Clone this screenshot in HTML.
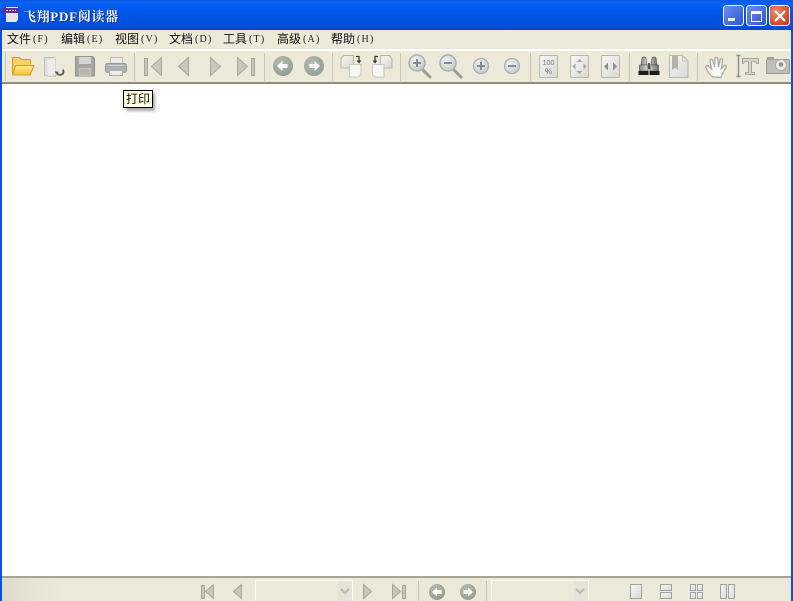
<!DOCTYPE html>
<html><head><meta charset="utf-8"><style>
html,body{margin:0;padding:0;width:793px;height:601px;overflow:hidden;background:#fff}
#a{position:relative;width:793px;height:601px;overflow:hidden}
#a div{position:absolute}
.m{top:31px;height:16px;font:12px/16px "WenQuanYi Zen Hei","Noto Sans CJK SC",sans-serif;color:#111;white-space:nowrap}
.m span{position:absolute;top:0;left:26px;font:10px/17px "Liberation Serif",serif;letter-spacing:1.2px;color:#222}
</style></head><body><div id="a">
<div style="left:0;top:0;width:793px;height:30px;background:linear-gradient(#0a55e2 0,#0a62f0 2px,#0860f5 4px,#0058ec 10px,#0054e3 18px,#0050dc 26px,#0046c8 30px)"></div>
<div style="left:23px;top:6px;font:bold 13px/19px 'Noto Serif CJK SC',serif;color:#fff;text-shadow:1px 1px 0 #0a2f9a;white-space:nowrap;letter-spacing:.6px">飞翔<span style="font-family:'Liberation Serif',serif;font-size:13px;letter-spacing:.8px">PDF</span>阅读器</div>
<div style="left:0;top:30px;width:793px;height:19px;background:#ece9d8"></div>
<div style="left:0;top:49px;width:793px;height:2px;background:#fff"></div>
<div style="left:0;top:51px;width:793px;height:31px;background:#ece9d8"></div>
<div style="left:0;top:82px;width:793px;height:2px;background:#918d7c"></div>
<div style="left:0;top:30px;width:2px;height:571px;background:#0a50e0"></div>
<div style="left:791px;top:30px;width:2px;height:571px;background:#0a50e0"></div>
<div class="m" style="left:7px">文件<span>(F)</span></div>
<div class="m" style="left:61px">编辑<span>(E)</span></div>
<div class="m" style="left:115px">视图<span>(V)</span></div>
<div class="m" style="left:169px">文档<span>(D)</span></div>
<div class="m" style="left:223px">工具<span>(T)</span></div>
<div class="m" style="left:277px">高级<span>(A)</span></div>
<div class="m" style="left:331px">帮助<span>(H)</span></div>
<div style="left:2px;top:576px;width:789px;height:2px;background:#a8a597"></div>
<div style="left:2px;top:578px;width:789px;height:23px;background:linear-gradient(90deg,#dcdacb 0,#e8e5d4 30px,#ece9d8 60px,#ece9d8 100%)"></div>
<div style="left:255px;top:580px;width:98px;height:21px;background:#ece9d8;border:1px solid #fbfaf3;border-bottom:0;box-sizing:border-box"></div>
<div style="left:491px;top:580px;width:98px;height:21px;background:#ece9d8;border:1px solid #fbfaf3;border-bottom:0;box-sizing:border-box"></div>
<svg style="position:absolute;left:0;top:0" width="793" height="601" viewBox="0 0 793 601" fill="none">
<defs>
<linearGradient id="g" x1="0" y1="0" x2="1" y2="1"><stop offset="0" stop-color="#f6f6f4"/><stop offset="1" stop-color="#d8d8d4"/></linearGradient>
<linearGradient id="y" x1="0" y1="0" x2="0" y2="1"><stop offset="0" stop-color="#ffeb8e"/><stop offset="1" stop-color="#f9c431"/></linearGradient>
<linearGradient id="bb" x1="0" y1="0" x2="1" y2="1"><stop offset="0" stop-color="#6d90f0"/><stop offset="1" stop-color="#2a52d8"/></linearGradient>
<linearGradient id="bar" x1="0" y1="0" x2="1" y2="0"><stop offset="0" stop-color="#8a8a86"/><stop offset=".45" stop-color="#d8d8d4"/><stop offset="1" stop-color="#6c6c68"/></linearGradient>
<radialGradient id="r" cx=".35" cy=".3" r=".8"><stop offset="0" stop-color="#f08a6c"/><stop offset="1" stop-color="#cc3a18"/></radialGradient>
<radialGradient id="c" cx=".4" cy=".35" r=".8"><stop offset="0" stop-color="#b4bdb2"/><stop offset="1" stop-color="#8b978c"/></radialGradient>
<radialGradient id="z" cx=".4" cy=".35" r=".8"><stop offset="0" stop-color="#f2f3f3"/><stop offset="1" stop-color="#bcc2c6"/></radialGradient>
</defs>
<!-- app icon -->
<path d="M6 7h12v13l-2 2H6z" fill="#e6e6e4"/><rect x="3" y="8" width="15" height="5" fill="#6a2a96"/><path d="M6 10.500h10" stroke="#e8d8f0" stroke-dasharray="2 1"/>
<!-- window buttons -->
<rect x="723.500" y="5.500" width="20" height="20" rx="3" fill="url(#bb)" stroke="#fff"/><rect x="728" y="18" width="7" height="3" fill="#fff"/>
<rect x="746.500" y="5.500" width="20" height="20" rx="3" fill="url(#bb)" stroke="#fff"/><rect x="751.500" y="11.500" width="10" height="10" stroke="#fff"/><rect x="751" y="11" width="11" height="3" fill="#fff"/>
<rect x="769.500" y="5.500" width="20" height="20" rx="3" fill="url(#r)" stroke="#fff"/><path d="M775 11l10 10M785 11l-10 10" stroke="#fff" stroke-width="2.200"/>
<!-- toolbar grip + separators -->
<g stroke="#c9c6b4"><path d="M5.500 52v29M134.500 53v28M264.500 53v28M332.500 53v28M400.500 53v28M530.500 53v28M629.500 53v28M697.500 53v28"/></g>
<!-- open -->
<path d="M12.500 74V57.500h7l2 2h9v5" fill="#f8d264" stroke="#d69a2a"/><path d="M12.500 75l3-9.500h18.500l-4 9.500z" fill="url(#y)" stroke="#d69a2a"/>
<!-- doc open -->
<path d="M44.500 57.500h9l2 1v18l-11-1z" fill="#dcdcd8" stroke="#c0c0ba"/><path d="M47.500 60l8-2v17l-8 1z" fill="#ececE8"/><path d="M57 73.500q3 3 6 0 1-2 0-4" stroke="#5c5c5c" stroke-width="1.800"/><path d="M54.500 71.500l4 0-1 4z" fill="#5c5c5c"/>
<!-- save -->
<path d="M75.500 56.500h17l2 2v17.500h-19z" fill="#a6a6a2" stroke="#929290"/><rect x="79" y="57" width="12" height="7" fill="#d4d4d0"/><rect x="79" y="68" width="12" height="8" fill="#c4c4bc"/><path d="M80 70h10M80 72h10M80 74h10" stroke="#aaa9a2"/>
<!-- print -->
<rect x="110.500" y="57.500" width="12" height="6" fill="#ecece8" stroke="#bcbcb8"/><rect x="105.500" y="63.500" width="21" height="9" rx="2" fill="#aeb0b0" stroke="#989a9a"/><rect x="109.500" y="70.500" width="13" height="5" fill="#f0f0ec" stroke="#aeaeaa"/><path d="M108 65.500h16" stroke="#d4d4d4"/>
<!-- nav -->
<g fill="#c9c7bb" stroke="#a9a79d">
<rect x="144.500" y="58.500" width="3" height="17"/><path d="M161.500 57.500v18l-10-9z"/>
<path d="M188.500 57.500v18l-10-9z"/>
<path d="M210.500 57.500v18l10-9z"/>
<path d="M237.500 57.500v18l10-9z"/><rect x="251.500" y="58.500" width="3" height="17"/>
<rect x="201.500" y="585.500" width="3" height="13"/><path d="M213.500 584.500v14l-8-7z"/>
<path d="M241.500 584.500v14l-8-7z"/>
<path d="M363.500 584.500v14l8-7z"/>
<path d="M392.500 584.500v14l8-7z"/><rect x="402.500" y="585.500" width="3" height="13"/>
</g>
<!-- circle arrows -->
<circle cx="283" cy="66" r="10" fill="url(#c)"/><path d="M277 66l5.500-5v3h5v4h-5v3z" fill="#fff"/>
<circle cx="314" cy="66" r="10" fill="url(#c)"/><path d="M320 66l-5.500-5v3h-5v4h5v3z" fill="#fff"/>
<circle cx="437" cy="592" r="8" fill="url(#c)"/><path d="M432 592l5-4.500v2.500h4.500v4H437v2.500z" fill="#fff"/>
<circle cx="468" cy="592" r="8" fill="url(#c)"/><path d="M473 592l-5-4.500v2.500h-4.500v4h4.500v2.500z" fill="#fff"/>
<!-- rotate -->
<path d="M344 55.500h9.500v12.500h-12.500v-9.500z" fill="url(#g)" stroke="#b5b5b0"/><path d="M349.500 64.500h11.500v10l-2.500 2.500h-9z" fill="#f6f6f2" stroke="#c8c8c2"/><path d="M356 56.500h3v5" stroke="#333" stroke-width="1.200"/><path d="M356.500 60.500h5l-2.500 3z" fill="#333"/>
<path d="M380.500 55.500h9l2.500 3v9.500h-11.500z" fill="url(#g)" stroke="#b5b5b0"/><path d="M372.500 64.500h11.500v12.500h-9l-2.500-2.500z" fill="#f6f6f2" stroke="#c8c8c2"/><path d="M378 56.500h-3v5" stroke="#333" stroke-width="1.200"/><path d="M372.500 60.500h5l-2.500 3z" fill="#333"/>
<!-- zoom lens -->
<path d="M423 70l7 7M454 70l7 7" stroke="#9c9c94" stroke-width="3" stroke-linecap="round"/>
<circle cx="417" cy="63" r="8" fill="url(#z)" stroke="#a9b0b0" stroke-width="1.500"/><path d="M413 63h8M417 59v8" stroke="#808c92" stroke-width="2"/>
<circle cx="448" cy="63" r="8" fill="url(#z)" stroke="#a9b0b0" stroke-width="1.500"/><path d="M444 63h8" stroke="#808c92" stroke-width="2"/>
<circle cx="481" cy="66" r="7.500" fill="url(#z)" stroke="#a9b0b0" stroke-width="1.200"/><path d="M477 66h8M481 62v8" stroke="#808c92" stroke-width="2"/>
<circle cx="512" cy="66" r="7.500" fill="url(#z)" stroke="#a9b0b0" stroke-width="1.200"/><path d="M508 66h8" stroke="#808c92" stroke-width="2"/>
<!-- page buttons -->
<g fill="url(#g)" stroke="#b8b8b2"><rect x="539.500" y="55.500" width="18" height="22" rx="1"/><rect x="570.500" y="55.500" width="18" height="22" rx="1"/><rect x="601.500" y="55.500" width="18" height="22" rx="1"/></g>
<text x="548.500" y="65" text-anchor="middle" font-family="Liberation Sans" font-size="7" fill="#777">100</text><text x="548.500" y="74" text-anchor="middle" font-family="Liberation Sans" font-size="8" fill="#777">%</text>
<path d="M579.500 59l3 3h-6zM579.500 74l3-3h-6zM572.500 66.500l3-3v6zM586.500 66.500l-3-3v6z" fill="#a6a6a2"/>
<path d="M604 66.500l4-4v8zM617 66.500l-4-4v8z" fill="#8e8e8a"/>
<!-- binoculars -->
<path d="M642 58q2-2 4 0l1 7h-6zM652 58q2-2 4 0l1 7h-6z" fill="url(#bar)" stroke="#555" stroke-width=".6"/><path d="M639.500 65h8.500v6h-8.500zM650 65h8.500v6H650z" fill="url(#bar)" stroke="#444" stroke-width=".6"/><rect x="638.500" y="71" width="10" height="4" fill="#1c1c1c"/><rect x="649.500" y="71" width="10" height="4" fill="#1c1c1c"/><rect x="648" y="63" width="2" height="6" fill="#555"/>
<!-- bookmark page -->
<path d="M669.500 55.500h13l5.500 5.500v16.500h-18.500z" fill="url(#g)" stroke="#b8b8b2"/><path d="M672 56h6v14l-3-2.500-3 2.500z" fill="#b4b0a4"/><path d="M682.500 56v5h5.500" stroke="#c8c8c2"/>
<!-- hand -->
<path d="M713 77c-3-2-6-6-7-9-1-2 1-3 2.500-2l3 3-1.500-8c0-2 2-2 3 0l1.500 6 .5-8c0-2 2.500-2 3 0l.5 8 1.500-7c.5-2 3-1.500 2.500.5l-1 8 2.500-3c1.500-1 3 0 2 2l-4 7-1 3z" fill="#f8f8f4" stroke="#b0b0aa" stroke-width="1.400"/>
<!-- text cursor + T -->
<path d="M736.500 55.500h4M736.500 76.500h4M738.500 56v20" stroke="#8c8c88" stroke-width="1.400"/>
<path d="M742.500 58.500h16v5h-2l-1-2h-4v11h3v2h-9v-2h3v-11h-4l-1 2h-1z" fill="#d8d6cc" stroke="#a8a69c"/>
<!-- camera -->
<rect x="766.500" y="59.500" width="23" height="14" rx="1" fill="#c0beb8" stroke="#9a9890"/><rect x="767" y="57" width="7" height="3" fill="#a4a29a"/><circle cx="781" cy="65" r="5.500" fill="#ecebe6" stroke="#b0aea6"/><circle cx="781" cy="64.500" r="2.300" fill="#92908a"/>
<!-- statusbar separators -->
<path d="M418.500 581v20M486.500 581v20" stroke="#c9c6b4"/>
<!-- dropdowns -->
<rect x="338" y="581" width="14" height="20" fill="#e6e4d8"/><path d="M341 589l4 4 4-4" stroke="#bcbaae" stroke-width="2"/>
<rect x="574" y="581" width="14" height="20" fill="#e6e4d8"/><path d="M576 589l4 4 4-4" stroke="#bcbaae" stroke-width="2"/>
<!-- view modes -->
<g stroke="#a0a2a6" fill="url(#g)"><rect x="630.500" y="584.500" width="11" height="14"/>
<rect x="660.500" y="584.500" width="11" height="6"/><rect x="660.500" y="592.500" width="11" height="6"/>
<rect x="690.500" y="584.500" width="5" height="6"/><rect x="697.500" y="584.500" width="5" height="6"/><rect x="690.500" y="592.500" width="5" height="6"/><rect x="697.500" y="592.500" width="5" height="6"/>
<rect x="720.500" y="584.500" width="6" height="14"/><rect x="728.500" y="584.500" width="6" height="14"/></g>
</svg>
<!-- tooltip -->
<div style="left:126px;top:93px;width:29px;height:18px;background:#a8a8a8;filter:blur(1.200px)"></div>
<div style="left:123px;top:90px;width:30px;height:18px;box-sizing:border-box;border:1px solid #000;background:#ffffe1;font:12px/16px 'WenQuanYi Zen Hei','Noto Sans CJK SC',sans-serif;color:#111;padding-left:2px">打印</div>
</div></body></html>
